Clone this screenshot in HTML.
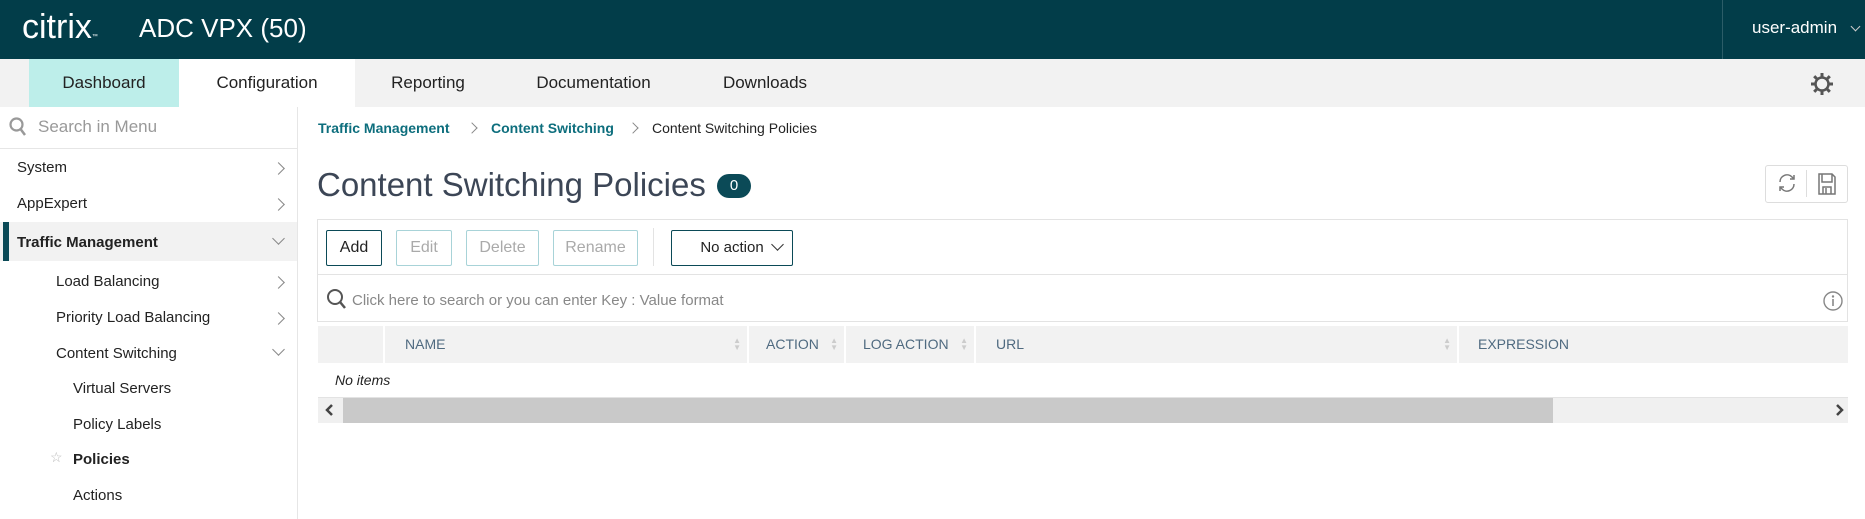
<!DOCTYPE html>
<html><head><style>
*{margin:0;padding:0;box-sizing:border-box}
body{width:1865px;height:519px;position:relative;overflow:hidden;background:#fff;font-family:"Liberation Sans",sans-serif;color:#222}
.a{position:absolute;white-space:nowrap}
.hdr{left:0;top:0;width:1865px;height:59px;background:#023d49}
.nav{left:0;top:59px;width:1865px;height:48px;background:#f2f2f2}
.tab{top:59px;height:48px;line-height:48px;font-size:17px;color:#222;text-align:center}
.side{font-size:15px;color:#222}
.chev{width:9px;height:9px;border-right:1.5px solid #888;border-top:1.5px solid #888;transform:rotate(45deg)}
.chevd{width:9px;height:9px;border-right:1.5px solid #888;border-bottom:1.5px solid #888;transform:rotate(45deg)}
.btn{top:230px;height:36px;border:1px solid #a8d3d8;border-radius:2px;font-size:16px;line-height:34px;text-align:center;color:#aaa}
.th{top:326px;height:37px;background:#f2f2f2;font-size:14px;line-height:37px;color:#4f6a80;padding-left:20px}
.sort{position:absolute;right:6px;top:11px;color:#ccc;font-size:8px;line-height:7px}
</style></head><body>
<div class="a hdr"></div>
<div class="a" style="left:22px;top:8px;font-size:34px;color:#fff;font-weight:300">citrix<span style="font-size:6px">™</span></div>
<div class="a" style="left:139px;top:13px;font-size:26px;color:#fff">ADC VPX (50)</div>
<div class="a" style="left:1722px;top:0;width:1px;height:59px;background:#2c5d68"></div>
<div class="a" style="left:1752px;top:18px;font-size:17px;color:#fff">user-admin</div>
<div class="a chevd" style="left:1852px;top:23px;border-color:#ccc;width:7px;height:7px"></div>
<div class="a nav"></div>
<div class="a tab" style="left:29px;width:150px;background:#bdeeea">Dashboard</div>
<div class="a tab" style="left:179px;width:176px;background:#fff">Configuration</div>
<div class="a tab" style="left:383px;width:90px">Reporting</div>
<div class="a tab" style="left:526px;width:135px">Documentation</div>
<div class="a tab" style="left:715px;width:100px">Downloads</div>
<svg class="a" style="left:1810px;top:72px" width="24" height="24" viewBox="0 0 24 24"><circle cx="12" cy="12" r="6.5" fill="none" stroke="#555" stroke-width="2.5"/><g stroke="#555" stroke-width="3"><path d="M12 1v4M12 19v4M1 12h4M19 12h4M4.2 4.2l2.8 2.8M17 17l2.8 2.8M4.2 19.8L7 17M17 7l2.8-2.8"/></g></svg>
<div class="a" style="left:297px;top:107px;width:1px;height:412px;background:#e6e6e6"></div>
<div class="a" style="left:0;top:148px;width:297px;height:1px;background:#e6e6e6"></div>
<svg class="a" style="left:9px;top:117px" width="18" height="20" viewBox="0 0 18 20"><circle cx="7.5" cy="7.5" r="6" fill="none" stroke="#999" stroke-width="2.2"/><path d="M11.5 12l4.5 6" stroke="#999" stroke-width="2.5"/></svg>
<div class="a" style="left:38px;top:117px;font-size:17px;color:#999">Search in Menu</div>
<div class="a side" style="left:17px;top:159px">System</div><div class="a chev" style="left:274px;top:164px"></div>
<div class="a side" style="left:17px;top:195px">AppExpert</div><div class="a chev" style="left:274px;top:200px"></div>
<div class="a" style="left:0;top:222px;width:297px;height:39px;background:#f2f2f2"></div>
<div class="a" style="left:3px;top:222px;width:6px;height:39px;background:#0b4a57"></div>
<div class="a side" style="left:17px;top:234px;font-weight:bold">Traffic Management</div><div class="a chevd" style="left:274px;top:234px"></div>
<div class="a side" style="left:56px;top:273px">Load Balancing</div><div class="a chev" style="left:274px;top:278px"></div>
<div class="a side" style="left:56px;top:309px">Priority Load Balancing</div><div class="a chev" style="left:274px;top:314px"></div>
<div class="a side" style="left:56px;top:345px">Content Switching</div><div class="a chevd" style="left:274px;top:345px"></div>
<div class="a side" style="left:73px;top:380px">Virtual Servers</div>
<div class="a side" style="left:73px;top:416px">Policy Labels</div>
<div class="a" style="left:50px;top:449px;color:#bbb;font-size:14px">☆</div>
<div class="a side" style="left:73px;top:451px;font-weight:bold">Policies</div>
<div class="a side" style="left:73px;top:487px">Actions</div>
<div class="a" style="left:318px;top:120px;font-size:14px;color:#0d6e7d;font-weight:bold">Traffic Management</div>
<div class="a chev" style="left:468px;top:124px;width:8px;height:8px"></div>
<div class="a" style="left:491px;top:120px;font-size:14px;color:#0d6e7d;font-weight:bold">Content Switching</div>
<div class="a chev" style="left:629px;top:124px;width:8px;height:8px"></div>
<div class="a" style="left:652px;top:120px;font-size:14px;color:#222">Content Switching Policies</div>
<div class="a" style="left:317px;top:166px;font-size:33px;color:#3c4656">Content Switching Policies</div>
<div class="a" style="left:717px;top:174px;width:34px;height:24px;border-radius:12px;background:#0b4a57;color:#fff;font-size:15px;line-height:24px;text-align:center">0</div>
<div class="a" style="left:1765px;top:165px;width:83px;height:38px;border:1px solid #ddd;border-radius:3px"></div>
<div class="a" style="left:1806px;top:170px;width:1px;height:27px;background:#ddd"></div>
<svg class="a" style="left:1775px;top:171px" width="24" height="24" viewBox="0 0 24 24" fill="none" stroke="#777" stroke-width="1.5"><path d="M5 11a7 7 0 0 1 12-5l2 2M19 13a7 7 0 0 1-12 5l-2-2"/><path d="M19 4v4h-4M5 20v-4h4"/></svg>
<svg class="a" style="left:1816px;top:172px" width="22" height="24" viewBox="0 0 22 24" fill="none" stroke="#777" stroke-width="1.5"><path d="M3 2h13l3 3v17H3z"/><path d="M6 2v8h10V2M7 22v-7h8v7M10 16v6"/></svg>
<div class="a" style="left:317px;top:219px;width:1531px;height:103px;border:1px solid #e3e3e3"></div>
<div class="a" style="left:317px;top:274px;width:1531px;height:1px;background:#e3e3e3"></div>
<div class="a btn" style="left:326px;width:56px;border-color:#0b4a57;color:#222">Add</div>
<div class="a btn" style="left:396px;width:56px">Edit</div>
<div class="a btn" style="left:466px;width:73px">Delete</div>
<div class="a btn" style="left:553px;width:85px">Rename</div>
<div class="a" style="left:653px;top:228px;width:1px;height:38px;background:#e3e3e3"></div>
<div class="a btn" style="left:671px;width:122px;border-color:#0b4a57;color:#222;font-size:15px">No action</div>
<div class="a chevd" style="left:773px;top:240px;border-color:#333"></div>
<svg class="a" style="left:326px;top:288px" width="22" height="24" viewBox="0 0 22 24"><circle cx="9" cy="9" r="7" fill="none" stroke="#555" stroke-width="2"/><path d="M14 14l5 6" stroke="#555" stroke-width="2.5"/></svg>
<div class="a" style="left:352px;top:292px;font-size:15px;color:#888">Click here to search or you can enter Key : Value format</div>
<svg class="a" style="left:1822px;top:290px" width="22" height="22" viewBox="0 0 22 22"><circle cx="11" cy="11" r="9" fill="none" stroke="#888" stroke-width="1.4"/><circle cx="11" cy="6.5" r="1.2" fill="#888"/><path d="M11 9v7" stroke="#888" stroke-width="1.6"/></svg>
<div class="a th" style="left:318px;width:65px"></div>
<div class="a th" style="left:385px;width:362px">NAME<div class="sort">▲<br>▼</div></div>
<div class="a th" style="left:749px;width:95px;padding-left:17px">ACTION<div class="sort">▲<br>▼</div></div>
<div class="a th" style="left:846px;width:128px;padding-left:17px">LOG ACTION<div class="sort">▲<br>▼</div></div>
<div class="a th" style="left:976px;width:481px">URL<div class="sort">▲<br>▼</div></div>
<div class="a th" style="left:1459px;width:389px;padding-left:19px">EXPRESSION</div>
<div class="a" style="left:335px;top:372px;font-size:14px;font-style:italic;color:#222">No items</div>
<div class="a" style="left:318px;top:397px;width:1530px;height:26px;background:#f0f0f0;border-top:1px solid #e3e3e3"></div>
<div class="a" style="left:343px;top:398px;width:1210px;height:25px;background:#c9c9c9"></div>
<svg class="a" style="left:323px;top:403px" width="12" height="14" viewBox="0 0 12 14"><path d="M9 2L4 7l5 5" fill="none" stroke="#444" stroke-width="2.5"/></svg>
<svg class="a" style="left:1834px;top:403px" width="12" height="14" viewBox="0 0 12 14"><path d="M3 2l5 5-5 5" fill="none" stroke="#444" stroke-width="2.5"/></svg>
</body></html>
